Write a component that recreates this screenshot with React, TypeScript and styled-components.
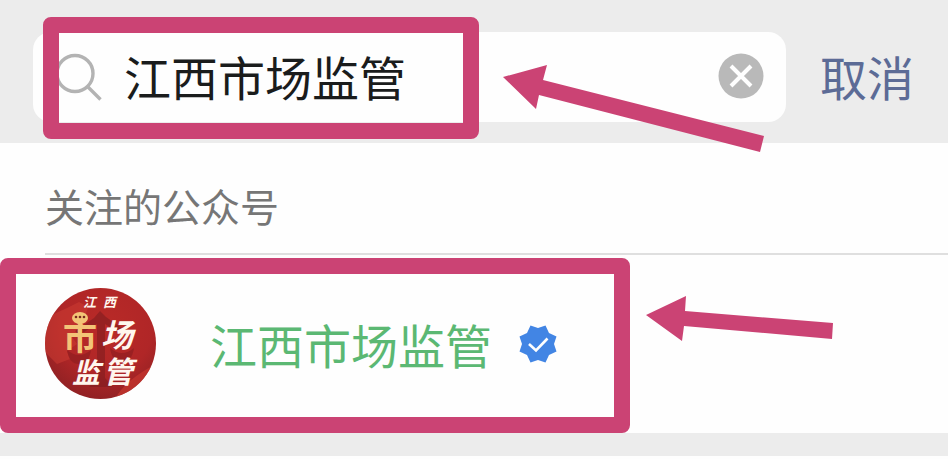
import React, { useState } from "react";
import styled, { createGlobalStyle } from "styled-components";

const PINK = "#cb4374";

const GlobalStyle = createGlobalStyle`
  * { box-sizing: border-box; }
  body {
    margin: 0;
    background: #fefefe;
    font-family: "Noto Sans CJK SC", sans-serif;
  }
`;

const Page = styled.main`
  overflow: hidden;
`;

const SearchHeader = styled.form`
  position: relative;
  display: flex;
  align-items: center;
  padding: 32px 0 21px 33px;
  background: #ececec;
`;

const SearchField = styled.label`
  flex: 1;
  min-width: 0;
  display: flex;
  align-items: center;
  gap: 20px;
  height: 90px;
  padding: 0 22px 2px 24px;
  border-radius: 18px;
  background: #fefefe;
`;

const SearchInput = styled.input`
  flex: 1;
  min-width: 0;
  padding: 0;
  border: 0;
  outline: 0;
  background: transparent;
  color: #1a1c1c;
  font: 400 47px/64px "Noto Sans CJK SC", sans-serif;
`;

const ClearButton = styled.button`
  display: flex;
  padding: 0;
  border: 0;
  background: transparent;
`;

const CancelButton = styled.button`
  padding: 0 34px 2px;
  border: 0;
  background: transparent;
  color: #5c6b96;
  font: 400 47px/64px "Noto Sans CJK SC", sans-serif;
`;

const GroupTitle = styled.h2`
  margin: 0 0 0 45px;
  padding: 34px 0 20px;
  border-bottom: 2px solid #dfdfdf;
  color: #767676;
  font-size: 39px;
  font-weight: 400;
  line-height: 56px;
`;

const AccountRow = styled.section`
  position: relative;
  padding: 33px 45px 34px;
`;

const AccountLink = styled.a`
  display: flex;
  align-items: center;
  color: #5bb873;
  font-size: 47px;
  line-height: 64px;
  text-decoration: none;
`;

const AccountName = styled.span`
  margin: 0 27px 0 54px;
`;

const Footer = styled.footer`
  height: 23px;
  background: #ececec;
`;

const Frame = styled.div<{ $top: number; $left: number; $width: number; $height: number }>`
  position: absolute;
  top: ${(p) => p.$top}px;
  left: ${(p) => p.$left}px;
  width: ${(p) => p.$width}px;
  height: ${(p) => p.$height}px;
  border: 16px solid ${PINK};
  border-radius: 8px;
  pointer-events: none;
`;

const Arrow = styled.svg<{ $top: number; $left: number }>`
  position: absolute;
  top: ${(p) => p.$top}px;
  left: ${(p) => p.$left}px;
  fill: ${PINK};
  pointer-events: none;
`;

const SearchIcon = () => (
  <svg width="47" height="50" viewBox="0 0 47 50" fill="none" stroke="#b3b3b3" strokeWidth="3.4" aria-hidden="true">
    <circle cx="18" cy="22.5" r="18" />
    <path d="M30.5 35.5 43.5 48.5" />
  </svg>
);

const ClearIcon = () => (
  <svg width="46" height="46" viewBox="0 0 46 46" aria-hidden="true">
    <circle cx="23" cy="23" r="22.5" fill="#b9b9b9" />
    <path d="M13 13 33 33M33 13 13 33" stroke="#fefefe" strokeWidth="4" />
  </svg>
);

const VerifiedIcon = () => (
  <svg width="38" height="38" viewBox="0 0 38 38" role="img" aria-label="已认证">
    <path
      d="M11.5 0.5 19 3 26.5 0.5 30 8 37.5 11.5 35 19 37.5 26.5 30 30 26.5 37.5 19 35 11.5 37.5 8 30 0.5 26.5 3 19 0.5 11.5 8 8Z"
      fill="#4285e4"
    />
    <path d="M10 19 17 25.5 28.5 13.5" fill="none" stroke="#fefefe" strokeWidth="2.6" />
  </svg>
);

const Avatar = () => (
  <svg width="111" height="111" viewBox="0 0 111 111" role="img" aria-label="江西市场监管">
    <defs>
      <radialGradient id="seal" cx="0.55" cy="0.35" r="0.7">
        <stop offset="0" stopColor="#b92a27" />
        <stop offset="0.6" stopColor="#b02627" />
        <stop offset="1" stopColor="#8c2023" />
      </radialGradient>
      <clipPath id="disc"><circle cx="55.5" cy="55.5" r="55.5" /></clipPath>
    </defs>
    <g clipPath="url(#disc)">
      <rect width="111" height="111" fill="url(#seal)" />
      <path d="M22 20 34 14 43 19 40 29 31 34 35 42 27 49 32 56 22 63 25 71 12 76 0 64V30Z" fill="#cc3d33" opacity=".55" />
      <path d="M55 23 61 29 81 43 76 46 60 36V90L68 99H44L52 90V36L34 47 30 43 49 30Z" fill="#7e1c20" opacity=".6" />
      <path d="M22 62Q34 72 46 62 44 76 34 76T22 62ZM65 60Q77 70 89 60 87 74 77 74T65 60Z" fill="#8a1c20" opacity=".6" />
      <path d="M70 111Q80 92 111 76V111Z" fill="#c8372f" opacity=".7" />
    </g>
    <g fontFamily="Noto Sans CJK SC, sans-serif" fontWeight="700" fill="#fff6ee">
      <text x="38" y="19" fontSize="13" fontStyle="italic">江</text>
      <text x="58" y="19" fontSize="13" fontStyle="italic">西</text>
      <text x="18" y="62" fontSize="34" fill="#f3c477">市</text>
      <text x="56" y="59" fontSize="32" fontStyle="italic">场</text>
      <text x="27" y="95" fontSize="28" fontStyle="italic">监</text>
      <text x="58" y="95" fontSize="30" fontStyle="italic">管</text>
    </g>
    <ellipse cx="35" cy="30" rx="8" ry="6" fill="#f3c477" />
    <g fill="#7c281f">
      <circle cx="31" cy="29" r="1.3" />
      <circle cx="35" cy="29" r="1.3" />
      <circle cx="39" cy="29" r="1.3" />
    </g>
  </svg>
);

export default function App() {
  const [query, setQuery] = useState("江西市场监管");
  return (
    <>
      <GlobalStyle />
      <Page>
        <SearchHeader role="search" onSubmit={(e) => e.preventDefault()}>
          <SearchField>
            <SearchIcon />
            <SearchInput aria-label="搜索" value={query} onChange={(e) => setQuery(e.target.value)} />
            <ClearButton type="button" aria-label="清除" onClick={() => setQuery("")}>
              <ClearIcon />
            </ClearButton>
          </SearchField>
          <CancelButton type="button">取消</CancelButton>
          <Frame $top={17} $left={43} $width={436} $height={122} />
          <Arrow $top={64} $left={502} width="264" height="90" viewBox="0 0 264 90" aria-hidden="true">
            <path d="M1 13 45 1 41 16 262 72 258 88 37 31 34 45Z" />
          </Arrow>
        </SearchHeader>
        <GroupTitle>关注的公众号</GroupTitle>
        <AccountRow>
          <AccountLink href="#account">
            <Avatar />
            <AccountName>江西市场监管</AccountName>
            <VerifiedIcon />
          </AccountLink>
          <Frame $top={3} $left={0} $width={630} $height={175} />
          <Arrow $top={40} $left={645} width="190" height="48" viewBox="0 0 190 48" aria-hidden="true">
            <path d="M1 20 41 1 40 16 188 28 187 44 39 31 37 46Z" />
          </Arrow>
        </AccountRow>
        <Footer />
      </Page>
    </>
  );
}
